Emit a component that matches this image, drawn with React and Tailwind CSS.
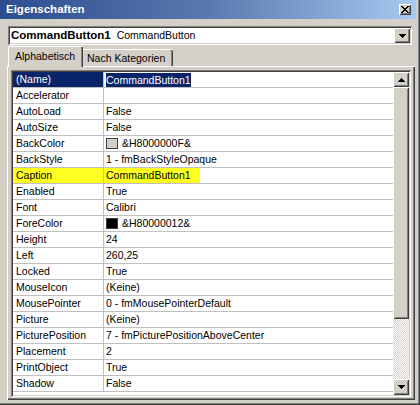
import React from "react";

const raised =
  "shadow-[inset_1px_1px_#ffffff,inset_-1px_-1px_#404040,inset_2px_2px_#d4d0c8,inset_-2px_-2px_#808080]";
const sunken =
  "shadow-[inset_1px_1px_#808080,inset_-1px_-1px_#ffffff,inset_2px_2px_#404040,inset_-2px_-2px_#d4d0c8]";

const rows = [
  { name: "(Name)", value: "CommandButton1", selected: true },
  { name: "Accelerator", value: "" },
  { name: "AutoLoad", value: "False" },
  { name: "AutoSize", value: "False" },
  { name: "BackColor", value: "&H8000000F&", swatch: "bg-[#d4d0c8]" },
  { name: "BackStyle", value: "1 - fmBackStyleOpaque" },
  { name: "Caption", value: "CommandButton1", marked: true },
  { name: "Enabled", value: "True" },
  { name: "Font", value: "Calibri" },
  { name: "ForeColor", value: "&H80000012&", swatch: "bg-black" },
  { name: "Height", value: "24" },
  { name: "Left", value: "260,25" },
  { name: "Locked", value: "True" },
  { name: "MouseIcon", value: "(Keine)" },
  { name: "MousePointer", value: "0 - fmMousePointerDefault" },
  { name: "Picture", value: "(Keine)" },
  { name: "PicturePosition", value: "7 - fmPicturePositionAboveCenter" },
  { name: "Placement", value: "2" },
  { name: "PrintObject", value: "True" },
  { name: "Shadow", value: "False" },
];

const Arrow = ({ down }) => (
  <svg width="7" height="4" viewBox="0 0 7 4" shapeRendering="crispEdges">
    {down ? (
      <path d="M0 0h7v1H0zM1 1h5v1H1zM2 2h3v1H2zM3 3h1v1H3z" fill="#000" />
    ) : (
      <path d="M3 0h1v1H3zM2 1h3v1H2zM1 2h5v1H1zM0 3h7v1H0z" fill="#000" />
    )}
  </svg>
);

const PropRow = ({ row }) => (
  <div className="flex h-[16px] border-b border-[#c0c0c0] leading-[15px]">
    <div
      className={`w-[91px] shrink-0 border-r border-[#c0c0c0] pl-[3px] whitespace-nowrap overflow-hidden ${
        row.selected
          ? "bg-[#0a246a] text-white"
          : row.marked
          ? "bg-[#ffff22]"
          : ""
      }`}
    >
      {row.name}
    </div>
    <div className="flex-1 pl-[2px] flex items-center whitespace-nowrap overflow-hidden">
      {row.swatch && (
        <span
          className={`w-[12px] h-[11px] mr-[4px] border border-[#404040] ${row.swatch}`}
        />
      )}
      {row.selected ? (
        <span className="bg-[#0a246a] text-white h-[14px] leading-[14px]">{row.value}</span>
      ) : row.marked ? (
        <span className="bg-[#ffff22] w-[96px] -ml-[2px] pl-[2px] h-[16px]">{row.value}</span>
      ) : (
        row.value
      )}
    </div>
  </div>
);

export default function App() {
  return (
    <div
      className="w-[420px] h-[405px] bg-[#d4d0c8] flex flex-col text-[10.5px] text-black shadow-[inset_-1px_-1px_#404040,inset_-2px_-2px_#808080]"
      style={{ fontFamily: '"Liberation Sans", Arial, sans-serif' }}
    >
      {/* title bar */}
      <div className="h-[19px] mr-[4px] flex items-center justify-between bg-gradient-to-r from-[#2c4d8f] via-[#5a79af] to-[#a6caf0] pl-[6px] pr-[5px]">
        <span className="text-white font-bold text-[11.5px]">Eigenschaften</span>
        <div className={`w-[12px] h-[11px] bg-[#d4d0c8] flex items-center justify-center ${raised}`}>
          <svg width="8" height="7" viewBox="0 0 8 7" shapeRendering="crispEdges">
            <path
              d="M0 0h2v1H0zM6 0h2v1H6zM1 1h2v1H1zM5 1h2v1H5zM2 2h4v1H2zM3 3h2v1H3zM2 4h4v1H2zM1 5h2v1H1zM5 5h2v1H5zM0 6h2v1H0zM6 6h2v1H6z"
              fill="#000"
            />
          </svg>
        </div>
      </div>

      {/* object combo */}
      <div className={`mt-[7px] ml-[8px] w-[404px] h-[19px] bg-white p-[2px] flex ${sunken}`}>
        <div className="flex-1 flex items-center pl-[1px] whitespace-nowrap">
          <span className="font-bold text-[11.5px]">CommandButton1</span>
          <span className="ml-[6px]">CommandButton</span>
        </div>
        <div className={`w-[16px] h-[15px] bg-[#d4d0c8] flex items-center justify-center ${raised}`}>
          <Arrow down />
        </div>
      </div>

      {/* tabs */}
      <div className="mt-[1px] h-[20px] ml-[8px] flex items-end relative z-10">
        <div className="h-[21px] -mb-[1px] w-[75px] bg-[#d4d0c8] border-t border-l border-white rounded-tl-[2px] shadow-[inset_-1px_0_#404040,inset_-2px_0_#808080] pl-[6px] pt-[2px]">
          Alphabetisch
        </div>
        <div className="h-[17px] w-[90px] border-t border-white rounded-tr-[2px] shadow-[inset_-1px_0_#404040,inset_-2px_0_#808080] pl-[4px] pt-[1px]">
          Nach Kategorien
        </div>
      </div>

      {/* tab panel */}
      <div className="ml-[7px] w-[408px] flex-1 mb-[5px] border-t border-l border-white shadow-[inset_-1px_-1px_#404040,inset_-2px_-2px_#808080] pl-[3px] pr-[4px] pt-[3px] pb-[3px] flex">
        <div className={`flex-1 p-[2px] flex ${sunken}`}>
          <div className="flex-1 bg-white overflow-hidden">
            {rows.map((row) => (
              <PropRow key={row.name} row={row} />
            ))}
          </div>
          {/* scrollbar */}
          <div className="w-[16px] flex flex-col">
            <div className={`h-[15px] bg-[#d4d0c8] flex items-center justify-center ${raised}`}>
              <Arrow />
            </div>
            <div className={`h-[232px] bg-[#d4d0c8] ${raised}`} />
            <div className="flex-1 bg-[image:repeating-conic-gradient(#d4d0c8_0_25%,#ffffff_0_50%)] bg-[length:2px_2px]" />
            <div className={`h-[16px] bg-[#d4d0c8] flex items-center justify-center ${raised}`}>
              <Arrow down />
            </div>
          </div>
        </div>
      </div>
    </div>
  );
}
